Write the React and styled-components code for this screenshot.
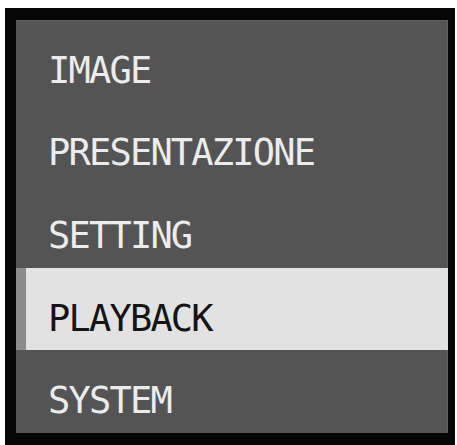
import React from "react";
import styled, { createGlobalStyle } from "styled-components";

const GlobalStyle = createGlobalStyle`
  html, body {
    margin: 0;
    padding: 0;
    background: #ffffff;
  }
`;

const Page = styled.div`
  width: 457px;
  height: 445px;
  box-sizing: border-box;
  padding: 8px 2px 0 5px;
  overflow: hidden;
`;

const Frame = styled.div`
  background: #060606;
  box-sizing: border-box;
  padding: 12px 7px 12px 11px;
  height: 437px;
`;

const Menu = styled.ul`
  list-style: none;
  margin: 0;
  padding: 0;
  height: 413px;
  display: flex;
  flex-direction: column;
  background: #545454;
  box-shadow: inset -1px 0 0 #626262, inset 0 1px 0 #5e5e5e;
`;

const Item = styled.li`
  flex: 1;
  display: flex;
  align-items: center;
  box-sizing: border-box;
  padding: 18px 0 0 32px;
  font-family: "DejaVu Sans Mono", "Liberation Mono", monospace;
  font-size: 37px;
  line-height: 37px;
  letter-spacing: -1.8px;
  color: ${(p) => (p.$active ? "#141414" : "#ececec")};
  background: ${(p) => (p.$active ? "#e2e2e2" : "transparent")};
  border-left: 10px solid ${(p) => (p.$active ? "#8c8c8c" : "transparent")};
  padding-left: 22px;
`;

const items = ["IMAGE", "PRESENTAZIONE", "SETTING", "PLAYBACK", "SYSTEM"];

export default function App() {
  return (
    <>
      <GlobalStyle />
      <Page>
        <Frame>
          <Menu>
            {items.map((label) => (
              <Item key={label} $active={label === "PLAYBACK"}>
                {label}
              </Item>
            ))}
          </Menu>
        </Frame>
      </Page>
    </>
  );
}
